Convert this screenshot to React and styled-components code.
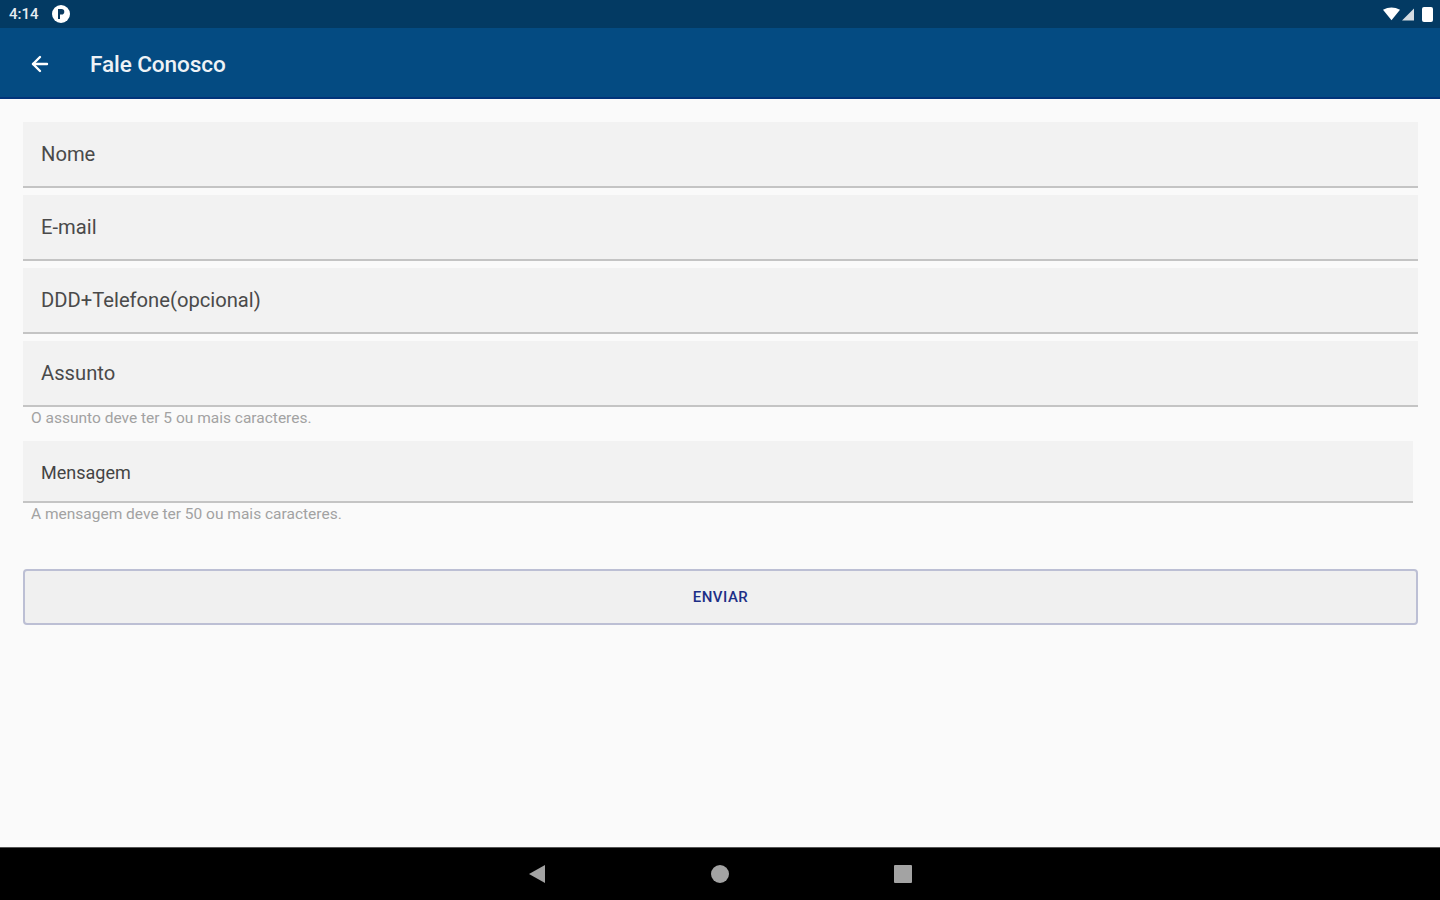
import React from "react";
import styled, { createGlobalStyle } from "styled-components";
import { ArrowLeft } from "lucide-react";

const fields = ["Nome", "E-mail", "DDD+Telefone(opcional)"];

const App = () => {
    return (
        <>
            <GlobalStyle />
            <Screen>
                <StatusBar>
                    <StatusLeft>
                        <Clock>4:14</Clock>
                        <svg width="20" height="20" viewBox="0 0 20 20">
                            <circle cx="10" cy="10" r="9" fill="#fff" />
                            <path d="M7 5h3.5a2.6 2.6 0 0 1 0 5.6H9V15H7z" fill="#0a3a60" />
                        </svg>
                    </StatusLeft>
                    <StatusRight>
                        <svg width="17" height="14" viewBox="0 0 18 14">
                            <path d="M0 2.5Q9-2.5 18 2.5L9 13.5z" fill="#fff" />
                        </svg>
                        <SignalIcon width="14" height="15" viewBox="0 0 14 14">
                            <path d="M13 1v12H1z" fill="#d5dce2" />
                        </SignalIcon>
                        <Battery />
                    </StatusRight>
                </StatusBar>
                <AppBar>
                    <BackButton>
                        <ArrowLeft size={24} color="#fff" strokeWidth={2.4} />
                    </BackButton>
                    <Title>Fale Conosco</Title>
                </AppBar>
                <Content>
                    <Form>
                        {fields.map((f) => (
                            <Field key={f}>{f}</Field>
                        ))}
                        <Field>Assunto</Field>
                        <Hint>O assunto deve ter 5 ou mais caracteres.</Hint>
                        <MessageField>Mensagem</MessageField>
                        <MessageHint>A mensagem deve ter 50 ou mais caracteres.</MessageHint>
                        <SendButton>ENVIAR</SendButton>
                    </Form>
                </Content>
                <NavBar>
                    <svg width="18" height="20" viewBox="0 0 18 20">
                        <path d="M17 1v18L1 10z" fill="#a3a3a3" />
                    </svg>
                    <HomeDot />
                    <RecentSquare />
                </NavBar>
            </Screen>
        </>
    );
};

export default App;

const GlobalStyle = createGlobalStyle`
  html, body {
    margin: 0;
    padding: 0;
    background: #fafafa;
  }
  * {
    box-sizing: border-box;
  }
`;

const Screen = styled.div`
  width: 1440px;
  height: 900px;
  display: flex;
  flex-direction: column;
  overflow: hidden;
  background: #fafafa;
  font-family: Roboto, "Liberation Sans", sans-serif;
`;

const StatusBar = styled.div`
  height: 28px;
  flex: none;
  background: #033a63;
  display: flex;
  align-items: center;
  justify-content: space-between;
  padding: 0 7px 0 9px;
`;

const StatusLeft = styled.div`
  display: flex;
  align-items: center;
  gap: 12px;
`;

const Clock = styled.span`
  color: #e6ecf1;
  font-size: 15px;
  font-weight: 500;
`;

const StatusRight = styled.div`
  display: flex;
  align-items: center;
`;

const SignalIcon = styled.svg`
  margin-left: 1px;
`;

const Battery = styled.div`
  width: 11px;
  height: 15px;
  margin-left: 7px;
  background: #fff;
  border-radius: 2px;
`;

const AppBar = styled.div`
  height: 71px;
  flex: none;
  background: #044b82;
  border-bottom: 2px solid #02347a;
  display: flex;
  align-items: center;
  padding: 0 0 0 28px;
`;

const BackButton = styled.div`
  width: 24px;
  height: 24px;
  margin-top: 3px;
  display: flex;
`;

const Title = styled.h1`
  margin: 4px 0 0 38px;
  color: #eef2f6;
  font-size: 22.6px;
  font-weight: 500;
  letter-spacing: -0.1px;
`;

const Content = styled.div`
  flex: 1;
  padding: 23px 22px 0 23px;
`;

const Form = styled.div`
  display: flex;
  flex-direction: column;
`;

const Field = styled.div`
  height: 66px;
  margin-bottom: 7px;
  padding: 0 0 0 18px;
  display: flex;
  align-items: center;
  background: #f2f2f2;
  border-bottom: 2px solid #c4c4c4;
  color: #4a4a4a;
  font-size: 20.2px;
`;

const Hint = styled.div`
  margin: -7px 0 0 8px;
  height: 34px;
  padding-bottom: 12px;
  display: flex;
  align-items: center;
  color: #a2a2a2;
  font-size: 15.5px;
  letter-spacing: 0;
`;

const MessageField = styled(Field)`
  height: 62px;
  width: 1390px;
  margin-bottom: 0;
  padding-top: 2px;
  font-size: 18px;
  color: #444;
`;

const MessageHint = styled(Hint)`
  margin-top: 0;
  height: 22px;
  padding-bottom: 0;
`;

const SendButton = styled.div`
  height: 56px;
  margin-top: 44px;
  display: flex;
  align-items: center;
  justify-content: center;
  background: #f0f0f0;
  border: 2px solid #bcbfd4;
  border-radius: 4px;
  color: #1d2f87;
  font-size: 15px;
  font-weight: 500;
  letter-spacing: 0.5px;
`;

const NavBar = styled.div`
  height: 53px;
  flex: none;
  background: #000;
  border-top: 1px solid #555;
  display: flex;
  align-items: center;
  justify-content: center;
  gap: 165px;
`;

const HomeDot = styled.div`
  width: 18px;
  height: 18px;
  border-radius: 50%;
  background: #a3a3a3;
`;

const RecentSquare = styled.div`
  width: 18px;
  height: 18px;
  border-radius: 1px;
  background: #a3a3a3;
`;
